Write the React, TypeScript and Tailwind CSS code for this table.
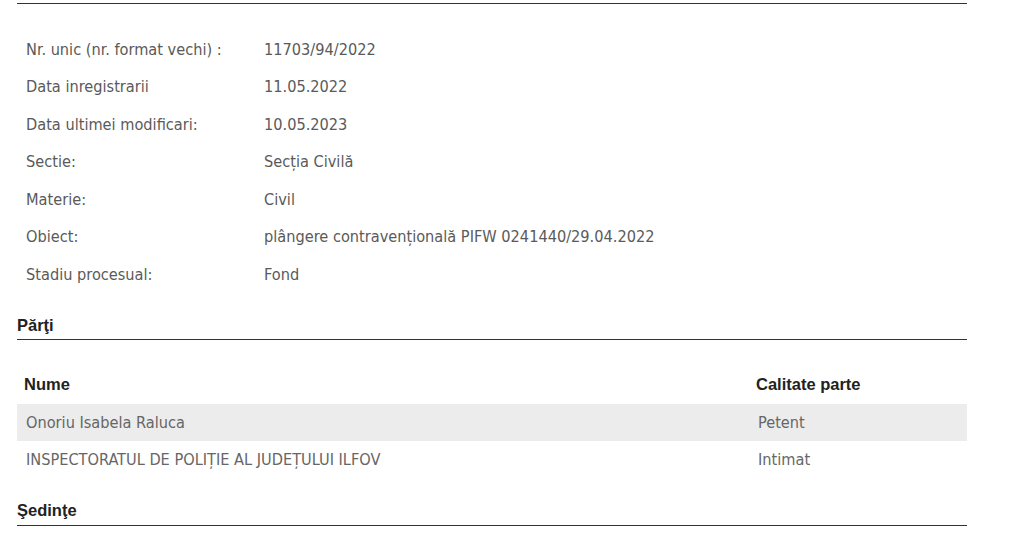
import React from "react";

const info: [string, string][] = [
  ["Nr. unic (nr. format vechi) :", "11703/94/2022"],
  ["Data inregistrarii", "11.05.2022"],
  ["Data ultimei modificari:", "10.05.2023"],
  ["Sectie:", "Secția Civilă"],
  ["Materie:", "Civil"],
  ["Obiect:", "plângere contravențională PIFW 0241440/29.04.2022"],
  ["Stadiu procesual:", "Fond"],
];

const body = { fontFamily: '"DejaVu Sans Condensed", "DejaVu Sans", sans-serif' };
const bold = { fontFamily: '"Liberation Sans", Arial, sans-serif' };

export default function App() {
  return (
    <div className="w-[1022px] h-[533px] bg-white overflow-hidden">
      <div className="ml-[17px] w-[950px] pt-[3px]">
        <div className="h-px bg-[#333]" />
        <div className="pt-[27px] pl-[9px] text-[16.2px] text-[#5a5a5a]" style={body}>
          {info.map(([k, v]) => (
            <div key={k} className="flex items-center h-[37.5px]">
              <div className="w-[238px]">{k}</div>
              <div>{v}</div>
            </div>
          ))}
        </div>
        <div className="mt-[19px] h-[26px] flex items-center text-[16.5px] font-bold text-[#222]" style={bold}>
          Părţi
        </div>
        <div className="h-px bg-[#333]" />
        <div className="mt-[26px]">
          <div className="flex items-center h-[38px] text-[16.5px] font-bold text-[#222]" style={bold}>
            <div className="w-[739px] pl-[7px]">Nume</div>
            <div>Calitate parte</div>
          </div>
          <div className="flex items-center h-[37px] pt-[2px] bg-[#ececec] text-[16.2px] text-[#666]" style={body}>
            <div className="w-[741px] pl-[9px]">Onoriu Isabela Raluca</div>
            <div>Petent</div>
          </div>
          <div className="flex items-center h-[38px] pt-[2px] text-[16.2px] text-[#666]" style={body}>
            <div className="w-[741px] pl-[9px]">INSPECTORATUL DE POLIȚIE AL JUDEȚULUI ILFOV</div>
            <div>Intimat</div>
          </div>
        </div>
        <div className="mt-[18px] h-[28px] flex items-center text-[16.5px] font-bold text-[#222]" style={bold}>
          Şedinţe
        </div>
        <div className="h-px bg-[#333]" />
      </div>
    </div>
  );
}
